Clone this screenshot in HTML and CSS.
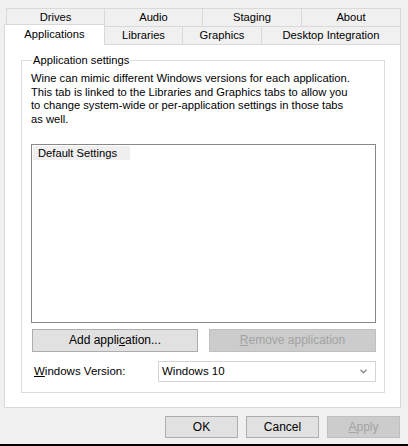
FILE: index.html
```html
<!DOCTYPE html>
<html>
<head>
<meta charset="utf-8">
<link rel="stylesheet" href="styles.css">
</head>
<body>
<div class="window">
  <div class="tabs">
    <div class="tabrow row1">
      <div class="tab w98">Drives</div>
      <div class="tab w99">Audio</div>
      <div class="tab w100">Staging</div>
      <div class="tab w100">About</div>
    </div>
    <div class="tabrow row2">
      <div class="tab sel">Applications</div>
      <div class="tab w79">Libraries</div>
      <div class="tab w80">Graphics</div>
      <div class="tab w140">Desktop Integration</div>
    </div>
  </div>
  <div class="panel">
    <fieldset class="group">
      <legend>Application settings</legend>
      <p class="desc">Wine can mimic different Windows versions for each application.<br>This tab is linked to the Libraries and Graphics tabs to allow you<br>to change system-wide or per-application settings in those tabs<br>as well.</p>
      <div class="list">
        <div class="item">Default Settings</div>
      </div>
      <div class="btnrow">
        <button class="btn add">Add appli<u>c</u>ation...</button>
        <button class="btn remove disabled"><u>R</u>emove application</button>
      </div>
      <div class="verrow">
        <span class="verlabel"><u>W</u>indows Version:</span>
        <div class="combo">
          <span>Windows 10</span>
          <svg class="chev" width="7" height="5" viewBox="0 0 7 5"><path d="M0.5 0.8 L3.5 3.8 L6.5 0.8" fill="none" stroke="#8a8a8a" stroke-width="1.4"/></svg>
        </div>
      </div>
    </fieldset>
  </div>
  <div class="footer">
    <button class="btn small">OK</button>
    <button class="btn small">Cancel</button>
    <button class="btn small disabled"><u>A</u>pply</button>
  </div>
  <div class="bottombar"></div>
</div>
</body>
</html>
```

FILE: styles.css
```css
* { box-sizing: border-box; }
html, body {
  margin: 0;
  padding: 0;
  background: #f0f0f0;
}
body {
  font-family: "Liberation Sans", Arial, sans-serif;
  font-size: 11.2px;
  color: #000;
}
.window {
  width: 408px;
  height: 446px;
  display: flex;
  flex-direction: column;
  background: #f0f0f0;
}
.tabs {
  padding-top: 8px;
}
.tabrow {
  display: flex;
}
.row1 {
  margin-left: 6px;
  height: 18px;
}
.row2 {
  margin-left: 4px;
  height: 20px;
  margin-top: -2px;
  align-items: flex-end;
}
.tab {
  height: 18px;
  border: 1px solid #d9d9d9;
  border-bottom: none;
  margin-right: -1px;
  background: #f0f0f0;
  display: flex;
  align-items: center;
  justify-content: center;
  padding-bottom: 1px;
}
.w98 { width: 99px; }
.w99 { width: 99px; }
.w100 { width: 100px; }
.w79 { width: 79px; }
.w80 { width: 80px; }
.w140 { width: 140px; }
.tab.sel {
  width: 101px;
  height: 21px;
  background: #fff;
  position: relative;
  z-index: 2;
  margin-bottom: -1px;
  padding-bottom: 3px;
}
.panel {
  margin-left: 4px;
  width: 397px;
  height: 364px;
  background: #fff;
  border: 1px solid #d9d9d9;
  padding: 9px 15px 0 16px;
}
.group {
  margin: 0;
  height: 339px;
  border: 1px solid #dcdcdc;
  padding: 0 8px 0 9px;
  min-width: 0;
}
.group legend {
  padding: 0 1px;
  margin-left: 1px;
  line-height: 12px;
}
.desc {
  margin: 6px 0 0 0;
  line-height: 13.7px;
}
.list {
  margin-top: 17px;
  height: 179px;
  border: 1px solid #888;
  background: #fff;
  padding: 1px;
}
.item {
  width: 97px;
  height: 14px;
  background: #efefef;
  padding-left: 5px;
  line-height: 14px;
}
.btnrow {
  display: flex;
  justify-content: space-between;
  margin-top: 6px;
  padding-left: 1px;
}
.btn {
  font-family: inherit;
  font-size: 12px;
  color: #000;
  background: #e1e1e1;
  border: 1px solid #adadad;
  height: 23px;
  padding: 0;
  margin: 0;
  border-radius: 0;
}
.btn u { text-decoration: underline; }
.add { width: 166px; }
.remove { width: 167px; }
.btn.disabled {
  background: #cccccc;
  border-color: #bfbfbf;
  color: #a3a3a3;
}
.verrow {
  display: flex;
  align-items: center;
  margin-top: 9px;
  padding-left: 3px;
}
.verlabel {
  width: 124px;
  font-size: 11.5px;
}
.combo {
  width: 218px;
  height: 21px;
  border: 1px solid #d4d4d4;
  background: #fff;
  display: flex;
  align-items: center;
  justify-content: space-between;
  padding: 0 8px 0 3px;
  font-size: 11.5px;
}
.chev { display: block; }
.footer {
  display: flex;
  justify-content: flex-end;
  gap: 8px;
  padding: 8px 8px 0 0;
  height: 36px;
}
.btn.small {
  width: 73px;
  height: 22px;
}
.bottombar {
  margin-top: auto;
  height: 2px;
  background: #000;
}
```
